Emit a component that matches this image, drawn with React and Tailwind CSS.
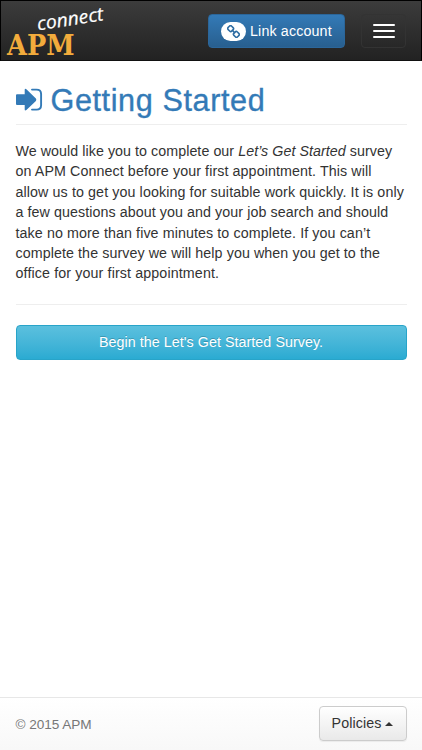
const lines = [
  { text: <>We would like you to complete our <em>Let’s Get Started</em> survey</>, cls: 'tracking-[0.05px]' },
  { text: 'on APM Connect before your first appointment. This will', cls: 'tracking-[0.09px]' },
  { text: 'allow us to get you looking for suitable work quickly. It is only', cls: 'tracking-[0.1px]' },
  { text: 'a few questions about you and your job search and should', cls: 'tracking-[0.07px]' },
  { text: 'take no more than five minutes to complete. If you can’t', cls: 'tracking-[0.09px]' },
  { text: 'complete the survey we will help you when you get to the', cls: 'tracking-[0.08px]' },
  { text: 'office for your first appointment.', cls: 'tracking-[0.12px]' },
];

function Logo() {
  return (
    <svg className="block h-[60px] w-[112px] shrink-0 overflow-visible" viewBox="0 0 112 60" aria-label="APM connect">
      <text x="7" y="54.5" textLength="67.5" lengthAdjust="spacingAndGlyphs" fill="#f3ac3c" fontSize="28.5" fontWeight="700" fontFamily="'DejaVu Serif', serif">APM</text>
      <text transform="translate(38 30.5) rotate(-9)" textLength="67" lengthAdjust="spacingAndGlyphs" fill="#fff" stroke="#fff" strokeWidth="0.2" fontSize="18.5" fontStyle="italic" fontFamily="'Open Sans', sans-serif">connect</text>
    </svg>
  );
}

function LinkIcon() {
  return (
    <svg className="h-[13px] w-[13px]" viewBox="0 0 12 12" fill="none" stroke="#2d6ca2" strokeWidth="1.45">
      <rect x="1" y="1.1" width="4.8" height="4.5" rx="1.5" transform="rotate(45 3.4 3.3)" />
      <rect x="6.2" y="6.4" width="4.8" height="4.5" rx="1.5" transform="rotate(45 8.6 8.7)" />
      <path d="M4.4 4.4l3.2 3.2" />
    </svg>
  );
}

export default function App() {
  return (
    <div className="flex h-[750px] w-[422px] flex-col overflow-hidden bg-white font-['Liberation_Sans',Arial,sans-serif] text-[14.27px] leading-[20.39px] text-[#333]">
      <header className="flex h-[61px] shrink-0 items-start border border-black border-b-[#111] bg-linear-to-b from-[#3c3c3c] to-[#222]">
        <div className="-ml-px -mt-px"><Logo /></div>
        <button className="ml-auto mt-[13px] flex h-[34px] w-[137px] items-center rounded-[4px] border border-[#2b669a] bg-linear-to-b from-[#337ab7] to-[#285f8f] pl-3 text-white">
          <span className="mr-[4px] flex h-[19px] w-[25px] items-center justify-center rounded-full bg-white"><LinkIcon /></span>
          <span className="whitespace-nowrap tracking-[0.14px]">Link account</span>
        </button>
        <button aria-label="Menu" className="ml-4 mr-[15px] mt-[13px] flex h-[34px] w-[45px] flex-col items-center justify-center gap-[4px] rounded-[4px] border border-[#333]">
          <span className="h-[2px] w-[22px] rounded-full bg-white" />
          <span className="h-[2px] w-[22px] rounded-full bg-white" />
          <span className="h-[2px] w-[22px] rounded-full bg-white" />
        </button>
      </header>
      <main className="flex-1 px-[15.5px]">
        <h1 className="mt-[21px] flex h-[43px] items-start border-b border-[#eee] text-[30.6px] leading-[36px] text-[#337ab7]">
          <svg className="mr-[8px] mt-[6px] h-[24px] w-[27px] shrink-0" viewBox="0 0 27 24">
            <path d="M0 7.3Q0 6.3 1 6.3H8.7V2Q8.7 .1 10.4 1.3L19.9 10.5Q20.8 11.7 19.9 12.9L10.4 22.1Q8.7 23.3 8.7 21.4V17.1H1Q0 17.1 0 16.1Z" fill="#337ab7" />
            <path d="M16 1.6H20.5Q25.1 1.6 25.1 6V17.2Q25.1 21.6 20.5 21.6H16" fill="none" stroke="#337ab7" strokeWidth="1.9" strokeLinecap="round" />
          </svg>
          <span className="whitespace-nowrap tracking-[0.6px] [-webkit-text-stroke:0.35px_#337ab7]">Getting Started</span>
        </h1>
        <p className="mt-[16px]">
          {lines.map((line, i) => (
            <span key={i} className={`block whitespace-nowrap ${line.cls}`}>{line.text}</span>
          ))}
        </p>
        <hr className="mt-5 border-t border-[#eee]" />
        <button className="mt-5 flex h-[35px] w-full items-center justify-center rounded-[4px] border border-[#28a4c9] bg-linear-to-b from-[#5bc0de] to-[#2aabd2] text-white [text-shadow:0_-1px_0_rgba(0,0,0,0.2)]">
          <span className="whitespace-nowrap tracking-[0.06px]">Begin the Let's Get Started Survey.</span>
        </button>
      </main>
      <footer className="flex h-[53px] shrink-0 items-start justify-between border-t border-[#e7e7e7] bg-linear-to-b from-white to-[#f8f8f8] px-[15.5px]">
        <span className="mt-[17px] text-[13.6px] tracking-[-0.05px] text-[#777]">© 2015 APM</span>
        <button className="mt-[8px] flex h-[35px] w-[88px] items-center justify-center rounded-[4px] border border-[#ccc] bg-linear-to-b from-white to-[#e9e9e9] shadow-[0_1px_1px_rgba(0,0,0,0.06)]">
          <span className="tracking-[0.1px]">Policies</span>
          <svg className="ml-1 h-1 w-2" viewBox="0 0 8 4"><path d="M0 4L4 0L8 4Z" fill="#333" /></svg>
        </button>
      </footer>
    </div>
  );
}
